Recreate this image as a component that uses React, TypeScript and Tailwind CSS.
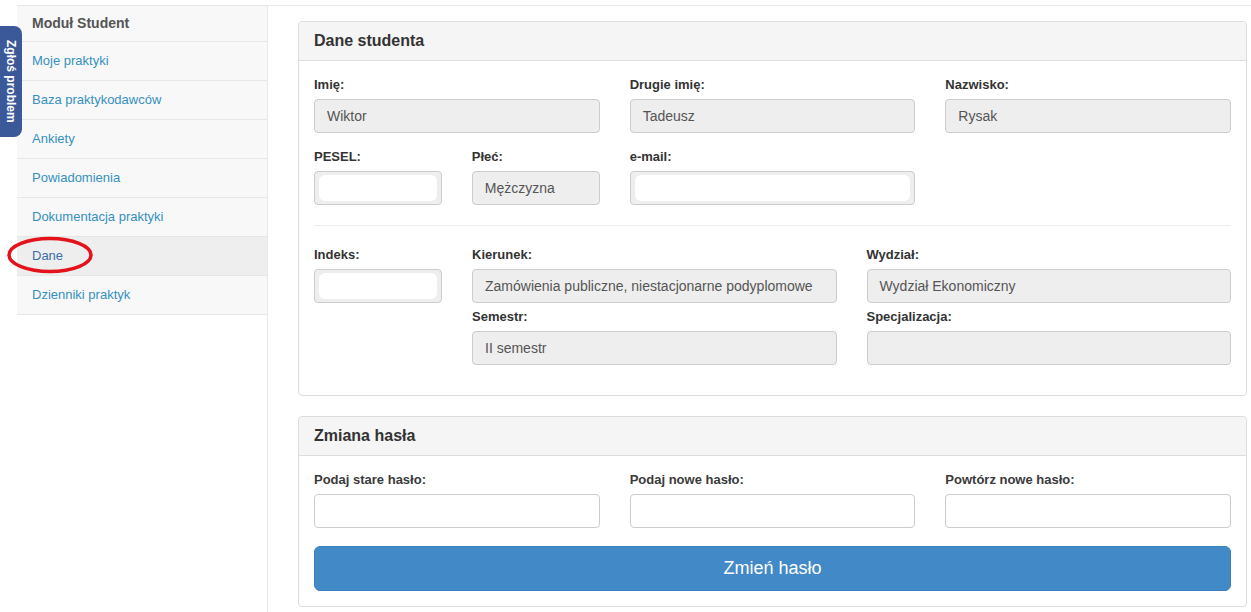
import React from 'react'

const font = { fontFamily: '"Liberation Sans", Arial, sans-serif' }

const menu = [
  'Moje praktyki',
  'Baza praktykodawców',
  'Ankiety',
  'Powiadomienia',
  'Dokumentacja praktyki',
  'Dane',
  'Dzienniki praktyk',
]

function Field({
  label,
  value,
  hidden,
  className = '',
}: {
  label: string
  value?: string
  hidden?: boolean
  className?: string
}) {
  return (
    <div className={className}>
      <div className="mb-[5px] h-[18px] text-[13px] font-bold leading-[18px] text-[#333]">{label}</div>
      <div className="flex h-[34px] items-center rounded-[4px] border border-[#ccc] bg-[#eee] px-[12px] text-[14px] text-[#555]">
        {hidden ? <div className="-mx-[8px] h-[26px] flex-1 rounded-[6px] bg-white" /> : value}
      </div>
    </div>
  )
}

function Panel({ title, children }: { title: string; children: React.ReactNode }) {
  return (
    <div className="rounded-[4px] border border-[#ddd] bg-white">
      <div className="flex h-[39px] items-center rounded-t-[4px] border-b border-[#ddd] bg-[#f5f5f5] px-[15px] text-[16px] font-bold text-[#333]">
        {title}
      </div>
      <div className="p-[15px]">{children}</div>
    </div>
  )
}

function PasswordField({ label }: { label: string }) {
  return (
    <div>
      <div className="mb-[5px] h-[18px] text-[13px] font-bold leading-[18px] text-[#3a3a3a]">{label}</div>
      <div className="h-[34px] rounded-[4px] border border-[#ccc] bg-white" />
    </div>
  )
}

export default function App() {
  return (
    <div className="relative min-h-[612px] bg-white pt-[5px]" style={font}>
      {/* Zgłoś problem tab */}
      <div className="absolute left-0 top-[26px] flex h-[111px] w-[22px] items-center justify-center rounded-r-[8px] bg-[#3b5998]">
        <span className="text-[12px] font-bold text-white [writing-mode:vertical-rl]">Zgłoś problem</span>
      </div>

      {/* annotation around "Dane" */}
      <svg className="pointer-events-none absolute left-[6px] top-[235px]" width="90" height="40" viewBox="0 0 90 40">
        <ellipse cx="44" cy="20" rx="41" ry="16.5" fill="none" stroke="#e3121b" strokeWidth="3.5" />
      </svg>

      <div className="ml-[17px] flex min-h-[607px] border-t border-[#e7e7e7]">
        <aside className="w-[251px] shrink-0 border-r border-[#e7e7e7]">
          <div className="flex h-[36px] items-center border-b border-[#e7e7e7] bg-[#f8f8f8] px-[15px] text-[14px] font-bold text-[#555]">
            Moduł Student
          </div>
          {menu.map((item) => (
            <div
              key={item}
              className={`flex h-[39px] items-center border-b border-[#e7e7e7] px-[15px] text-[13px] ${
                item === 'Dane' ? 'bg-[#eee] text-[#3a6ea5]' : 'bg-[#f8f8f8] text-[#3590c0]'
              }`}
            >
              {item}
            </div>
          ))}
        </aside>

        <main className="flex-1 pl-[30px] pr-[4px] pt-[15px]">
          <Panel title="Dane studenta">
            <div className="grid grid-cols-6 gap-x-[30px] gap-y-[15px]">
              <Field className="col-span-2" label="Imię:" value="Wiktor" />
              <Field className="col-span-2" label="Drugie imię:" value="Tadeusz" />
              <Field className="col-span-2" label="Nazwisko:" value="Rysak" />
              <Field label="PESEL:" hidden />
              <Field label="Płeć:" value="Mężczyzna" />
              <Field className="col-span-2" label="e-mail:" hidden />
            </div>

            <div className="my-[20px] border-t border-[#eee]" />

            <div className="flex gap-x-[30px] pb-[15px]">
              <Field className="w-[128px] shrink-0" label="Indeks:" hidden />
              <div className="grid flex-1 grid-cols-2 gap-x-[30px] gap-y-[5px]">
                <Field label="Kierunek:" value="Zamówienia publiczne, niestacjonarne podyplomowe" />
                <Field label="Wydział:" value="Wydział Ekonomiczny" />
                <Field label="Semestr:" value="II semestr" />
                <Field label="Specjalizacja:" value="" />
              </div>
            </div>
          </Panel>

          <div className="mt-[20px]">
            <Panel title="Zmiana hasła">
              <div className="grid grid-cols-3 gap-x-[30px]">
                <PasswordField label="Podaj stare hasło:" />
                <PasswordField label="Podaj nowe hasło:" />
                <PasswordField label="Powtórz nowe hasło:" />
              </div>
              <button className="mt-[18px] flex h-[45px] w-full items-center justify-center rounded-[6px] border border-[#3a80be] bg-[#4289c8] text-[18px] text-white">
                Zmień hasło
              </button>
            </Panel>
          </div>
        </main>
      </div>
    </div>
  )
}
